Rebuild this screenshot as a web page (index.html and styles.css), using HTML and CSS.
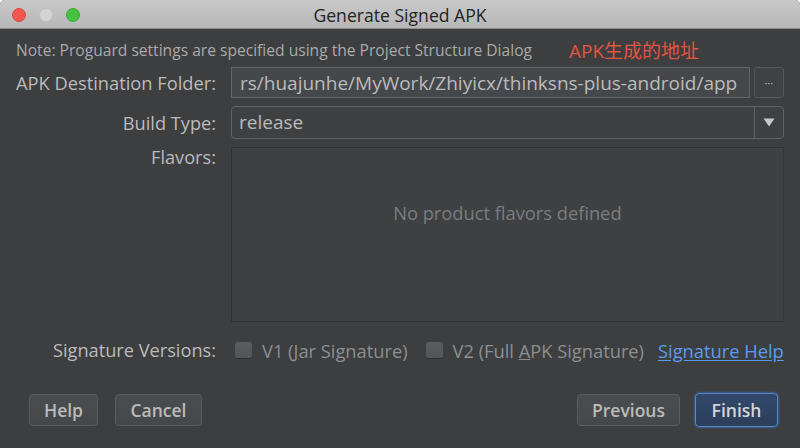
FILE: index.html
```html
<!DOCTYPE html>
<html>
<head>
<meta charset="utf-8">
<link rel="stylesheet" href="styles.css">
</head>
<body>
<div class="window">
  <div class="titlebar">
    <div class="lights">
      <span class="light red"></span>
      <span class="light gray"></span>
      <span class="light green"></span>
    </div>
    <div class="title">Generate Signed APK</div>
  </div>
  <div class="content">
    <div class="note">
      <span class="note-text">Note: Proguard settings are specified using the Project Structure Dialog</span>
      <span class="note-red">APK生成的地址</span>
    </div>
    <div class="form">
      <div class="label l-dest">APK Destination Folder:</div>
      <div class="field-row">
        <div class="textfield">rs/huajunhe/MyWork/Zhiyicx/thinksns-plus-android/app</div>
        <div class="browse">···</div>
      </div>
      <div class="label l-build">Build Type:</div>
      <div class="combo">
        <div class="combo-value">release</div>
        <div class="combo-arrow"><svg width="12" height="9" viewBox="0 0 12 9"><path d="M0.5 0.5 H11.5 L6 8.5 Z" fill="#c8c8c8"/></svg></div>
      </div>
      <div class="label l-flav">Flavors:</div>
      <div class="flavors">No product flavors defined</div>
      <div class="label l-sig">Signature Versions:</div>
      <div class="sig-row">
        <span class="check"></span><span class="check-label">V1 (<u>J</u>ar Signature)</span>
        <span class="check c2"></span><span class="check-label">V2 (Full <u>A</u>PK Signature)</span>
        <a class="link">Signature Help</a>
      </div>
    </div>
    <div class="buttons">
      <div class="btn b-help">Help</div>
      <div class="btn b-cancel">Cancel</div>
      <div class="spacer"></div>
      <div class="btn b-prev">Previous</div>
      <div class="btn b-finish">Finish</div>
    </div>
  </div>
</div>
</body>
</html>
```
FILE: styles.css
```css
html, body {
  margin: 0;
  padding: 0;
  background: #ffffff;
}
.window {
  width: 800px;
  height: 448px;
  background: #3c3e40;
  border-radius: 5px 5px 0 0;
  overflow: hidden;
  font-family: "Open Sans", "Noto Sans CJK SC", sans-serif;
  color: #bbbbbb;
  display: flex;
  flex-direction: column;
}
.titlebar {
  height: 29px;
  flex: 0 0 29px;
  background: linear-gradient(#c9c9c9, #b6b6b6);
  border-bottom: 1px solid #8e8e8e;
  box-sizing: border-box;
  position: relative;
  display: flex;
  align-items: center;
  justify-content: center;
}
.lights {
  position: absolute;
  left: 12px;
  top: 8px;
  display: flex;
  gap: 13px;
}
.light {
  width: 14px;
  height: 14px;
  border-radius: 50%;
  box-sizing: border-box;
}
.red { background: #f2574f; border: 1px solid #dc4a42; }
.gray { background: #d3d3d3; border: 1px solid #c3c3c3; }
.green { background: #45c23f; border: 1px solid #3aaa35; }
.title {
  font-size: 17.6px;
  color: #232323;
  padding-top: 1px;
}
.content {
  flex: 1;
  display: flex;
  flex-direction: column;
  padding: 0 17px 0 16px;
}
.note {
  height: 40px;
  display: flex;
  align-items: center;
  padding-top: 1px;
  box-sizing: border-box;
}
.note-text {
  font-size: 15.6px;
  color: #aaaaaa;
}
.note-red {
  font-size: 19px;
  color: #e2553e;
  margin-left: 37px;
}
.form {
  display: grid;
  grid-template-columns: 200px 1fr;
  column-gap: 15px;
  grid-template-rows: 31px 33px 175px 40px;
  row-gap: 8px;
  margin-top: -2px;
}
.label {
  text-align: right;
  font-size: 18.2px;
  color: #bbbbbb;
  display: flex;
  align-items: center;
  justify-content: flex-end;
  white-space: nowrap;
}
.l-dest {
  font-size: 18.3px;
}
.l-flav {
  align-items: flex-start;
  margin-top: -2px;
}
.field-row {
  display: flex;
  gap: 4px;
}
.textfield {
  flex: 1;
  background: #45484a;
  border: 1px solid #626466;
  box-sizing: border-box;
  font-size: 19px;
  color: #bbbbbb;
  display: flex;
  align-items: center;
  padding-left: 8px;
  white-space: nowrap;
  overflow: hidden;
}
.browse {
  width: 30px;
  border: 1px solid #56585a;
  border-radius: 3px;
  box-sizing: border-box;
  background: #3f4244;
  display: flex;
  align-items: center;
  justify-content: center;
  font-size: 11px;
  color: #c4c4c4;
}
.combo {
  display: flex;
  border: 1px solid #5f6163;
  border-radius: 4px;
  background: #3e4042;
  box-sizing: border-box;
}
.combo-value {
  flex: 1;
  border-right: 1px solid #5f6163;
  font-size: 19px;
  color: #bbbbbb;
  display: flex;
  align-items: center;
  padding-left: 7px;
  padding-bottom: 1px;
}
.combo-arrow {
  width: 28px;
  display: flex;
  align-items: center;
  justify-content: center;
}
.flavors {
  border: 1px solid #2f3133;
  border-right-color: #353739;
  background: #3e4042;
  box-sizing: border-box;
  display: flex;
  align-items: center;
  justify-content: center;
  font-size: 18.3px;
  color: #7b7d7f;
  padding-bottom: 44px;
}
.sig-row {
  display: flex;
  align-items: center;
  font-size: 18.3px;
  margin-left: 4px;
  white-space: nowrap;
}
.check {
  width: 17px;
  height: 17px;
  flex: 0 0 17px;
  border-radius: 3px;
  background: linear-gradient(#5a5c5e, #535557);
  border-bottom: 1px solid #2e3032;
  box-sizing: border-box;
  margin-right: 10px;
}
.check.c2 {
  margin-left: 18px;
}
.check-label {
  color: #8d8f91;
}
.check-label u {
  text-decoration-thickness: 1px;
}
.link {
  margin-left: 14px;
  color: #5c9cf0;
  text-decoration: underline;
  text-underline-offset: 2px;
}
.buttons {
  display: flex;
  align-items: center;
  margin-top: 23px;
  padding-left: 13px;
  padding-right: 5px;
  gap: 17px;
}
.spacer { flex: 1; }
.btn {
  height: 32px;
  box-sizing: border-box;
  border: 1px solid #5a5c5e;
  border-radius: 4px;
  background: linear-gradient(#4a4d4f, #45484a);
  color: #bbbbbb;
  font-size: 17.5px;
  font-weight: 600;
  display: flex;
  align-items: center;
  justify-content: center;
}
.b-help { width: 69px; }
.b-cancel { width: 87px; }
.b-prev { width: 103px; margin-right: -2px; }
.b-finish {
  width: 83px;
  height: 34px;
  background: linear-gradient(#33496c, #2b3e5c);
  border: 1px solid #5a86c2;
  box-shadow: 0 0 2px 1px #3a5f94;
  color: #d4d4d4;
}
```
